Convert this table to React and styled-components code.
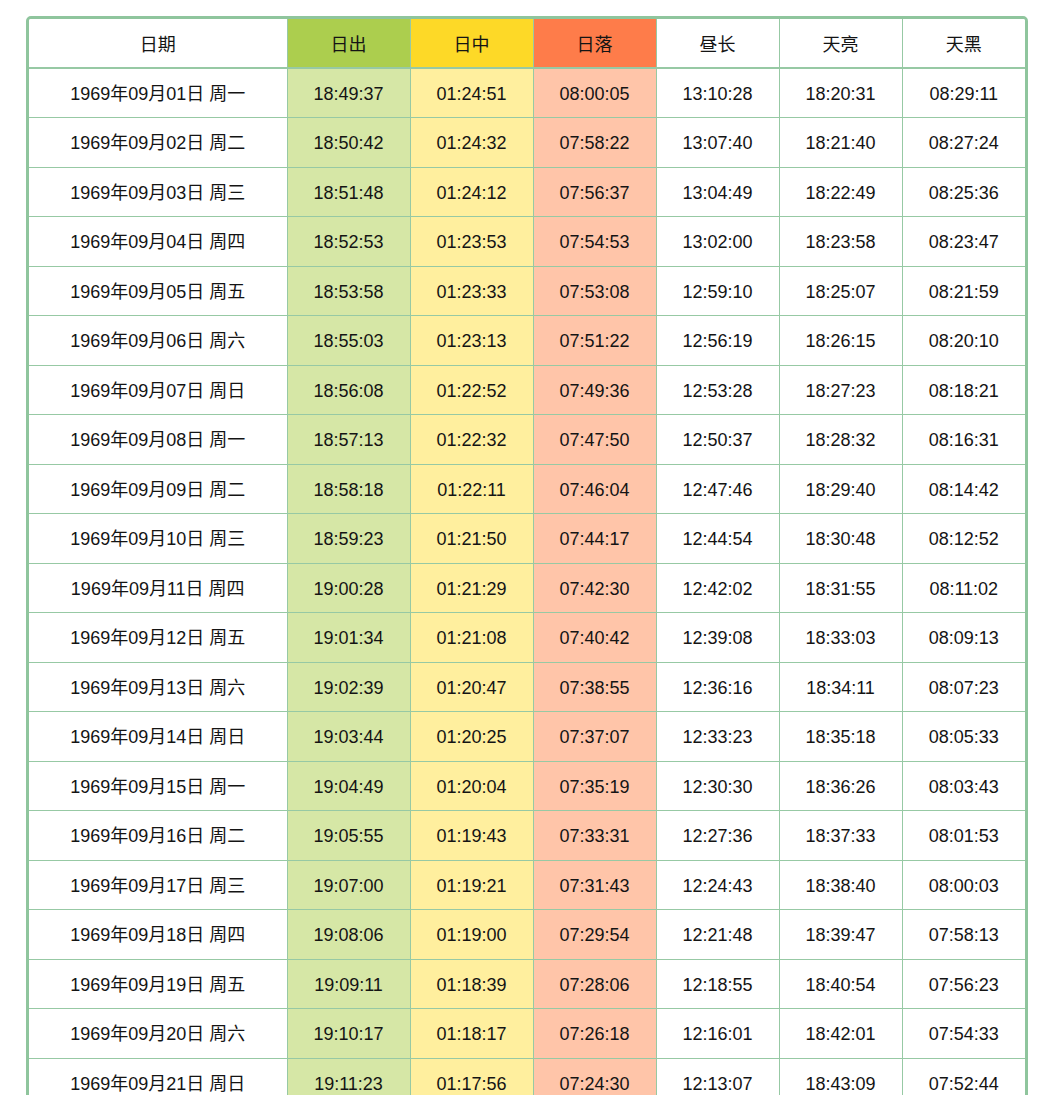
import React from "react";
import styled, { createGlobalStyle } from "styled-components";

const Global = createGlobalStyle`
  html, body { margin: 0; padding: 0; background: #fff; }
  body { font-family: "Liberation Sans", Arial, "Noto Sans CJK SC", sans-serif; color: #111; }
`;

const Page = styled.div`
  padding: 16px 17px 40px 26px;
`;

const Frame = styled.div`
  width: 996px;
  border: 3px solid #8fc59d;
  border-radius: 5px;
  overflow: hidden;
  background: #fff;
`;

const Table = styled.table`
  width: 996px;
  border-collapse: collapse;
  table-layout: fixed;
`;

const palette = {
  rise: { head: "#acce4e", body: "#d6e7a6" },
  noon: { head: "#fdd927", body: "#ffef9e" },
  set: { head: "#fe7c4a", body: "#ffc5a9" },
  none: { head: "#ffffff", body: "#ffffff" },
};

const Row = styled.tr`
  height: ${(p) => (p.$head ? "49px" : "49.5px")};
`;

const Cell = styled.td`
  padding: 2px 0 0;
  text-align: center;
  vertical-align: middle;
  font-family: "Liberation Sans", Arial, "Noto Sans CJK SC", sans-serif;
  font-size: 18px;
  line-height: 22px;
  font-weight: 400;
  color: #141414;
  white-space: nowrap;
  border: 1px solid #97c9a4;
  background: ${(p) => palette[p.$tone][p.$head ? "head" : "body"]};
  &:first-child { border-left: none; }
  &:last-child { border-right: none; }
  tr:first-child > & { border-top: none; padding-top: 3px; }
  tr:first-child > & { border-bottom-width: 2px; }
`;

const columns = [
  { label: "日期", tone: "none", width: 258 },
  { label: "日出", tone: "rise", width: 123 },
  { label: "日中", tone: "noon", width: 123 },
  { label: "日落", tone: "set", width: 123 },
  { label: "昼长", tone: "none", width: 123 },
  { label: "天亮", tone: "none", width: 123 },
  { label: "天黑", tone: "none", width: 123 },
];

const weekdays = ["一", "二", "三", "四", "五", "六", "日"];

const raw = [
  ["18:49:37", "01:24:51", "08:00:05", "13:10:28", "18:20:31", "08:29:11"],
  ["18:50:42", "01:24:32", "07:58:22", "13:07:40", "18:21:40", "08:27:24"],
  ["18:51:48", "01:24:12", "07:56:37", "13:04:49", "18:22:49", "08:25:36"],
  ["18:52:53", "01:23:53", "07:54:53", "13:02:00", "18:23:58", "08:23:47"],
  ["18:53:58", "01:23:33", "07:53:08", "12:59:10", "18:25:07", "08:21:59"],
  ["18:55:03", "01:23:13", "07:51:22", "12:56:19", "18:26:15", "08:20:10"],
  ["18:56:08", "01:22:52", "07:49:36", "12:53:28", "18:27:23", "08:18:21"],
  ["18:57:13", "01:22:32", "07:47:50", "12:50:37", "18:28:32", "08:16:31"],
  ["18:58:18", "01:22:11", "07:46:04", "12:47:46", "18:29:40", "08:14:42"],
  ["18:59:23", "01:21:50", "07:44:17", "12:44:54", "18:30:48", "08:12:52"],
  ["19:00:28", "01:21:29", "07:42:30", "12:42:02", "18:31:55", "08:11:02"],
  ["19:01:34", "01:21:08", "07:40:42", "12:39:08", "18:33:03", "08:09:13"],
  ["19:02:39", "01:20:47", "07:38:55", "12:36:16", "18:34:11", "08:07:23"],
  ["19:03:44", "01:20:25", "07:37:07", "12:33:23", "18:35:18", "08:05:33"],
  ["19:04:49", "01:20:04", "07:35:19", "12:30:30", "18:36:26", "08:03:43"],
  ["19:05:55", "01:19:43", "07:33:31", "12:27:36", "18:37:33", "08:01:53"],
  ["19:07:00", "01:19:21", "07:31:43", "12:24:43", "18:38:40", "08:00:03"],
  ["19:08:06", "01:19:00", "07:29:54", "12:21:48", "18:39:47", "07:58:13"],
  ["19:09:11", "01:18:39", "07:28:06", "12:18:55", "18:40:54", "07:56:23"],
  ["19:10:17", "01:18:17", "07:26:18", "12:16:01", "18:42:01", "07:54:33"],
  ["19:11:23", "01:17:56", "07:24:30", "12:13:07", "18:43:09", "07:52:44"],
];

const rows = raw.map((times, i) => {
  const d = String(i + 1).padStart(2, "0");
  return [`1969年09月${d}日 周${weekdays[i % 7]}`, ...times];
});

export default function App() {
  return (
    <>
      <Global />
      <Page>
        <Frame>
          <Table>
            <colgroup>
              {columns.map((c) => (
                <col key={c.label} style={{ width: c.width }} />
              ))}
            </colgroup>
            <tbody>
              <Row $head>
                {columns.map((c) => (
                  <Cell as="th" key={c.label} $head $tone={c.tone}>
                    {c.label}
                  </Cell>
                ))}
              </Row>
              {rows.map((r) => (
                <Row key={r[0]}>
                  {r.map((v, j) => (
                    <Cell key={j} $tone={columns[j].tone}>
                      {v}
                    </Cell>
                  ))}
                </Row>
              ))}
            </tbody>
          </Table>
        </Frame>
      </Page>
    </>
  );
}
